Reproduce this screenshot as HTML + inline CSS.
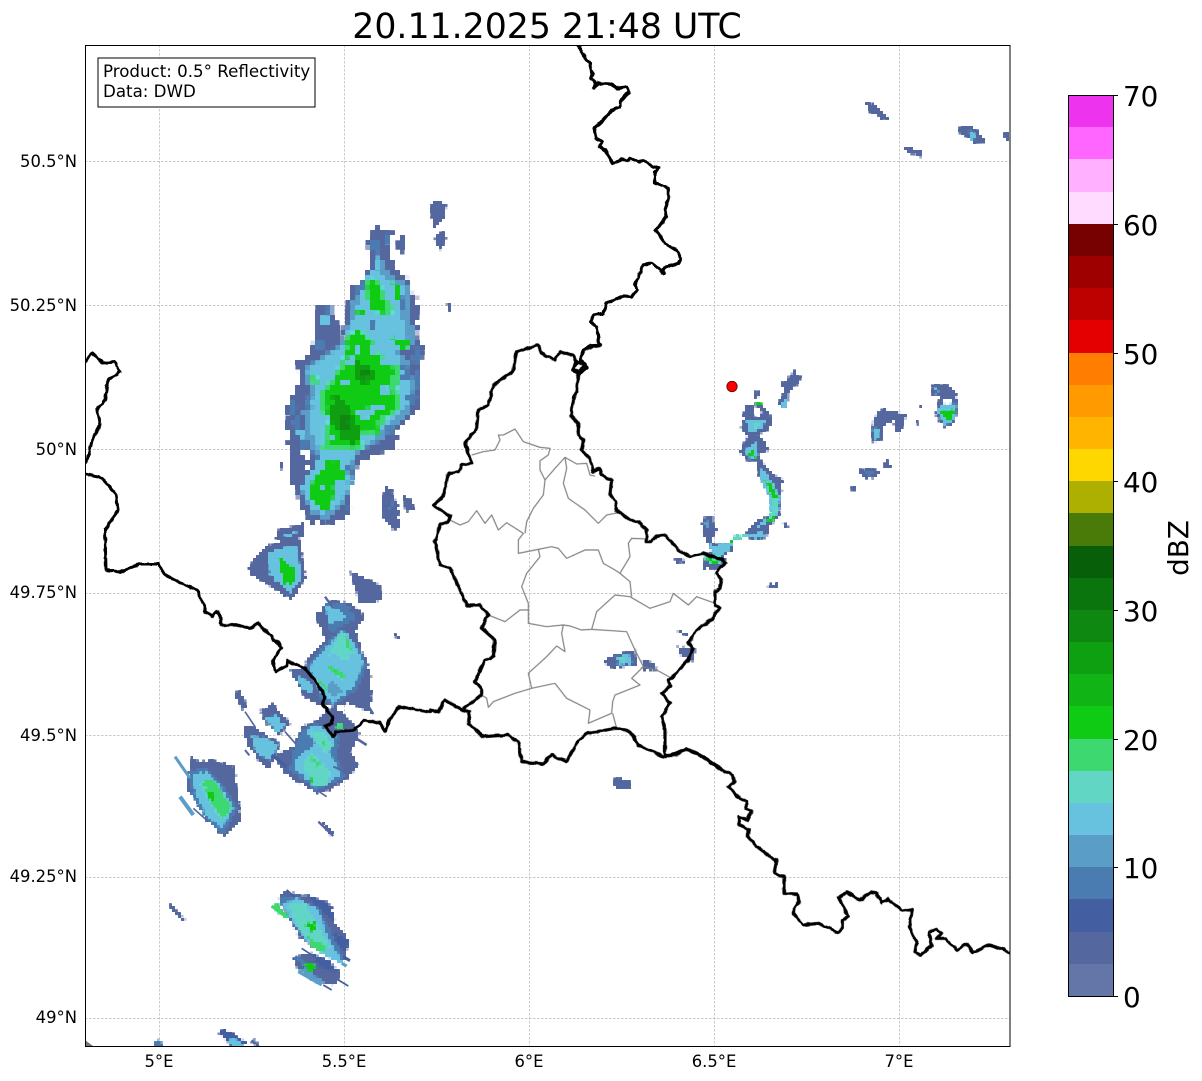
<!DOCTYPE html>
<html><head><meta charset="utf-8"><style>
html,body{margin:0;padding:0;background:#fff;width:1202px;height:1081px;overflow:hidden}
svg{display:block;font-family:"DejaVu Sans",sans-serif}
.g line{stroke:#b6b6b6;stroke-width:.7;stroke-dasharray:2.5 1.5}
.b{fill:none;stroke:#000;stroke-width:3;stroke-linejoin:round;stroke-linecap:round}
.c{fill:none;stroke:#808080;stroke-width:1.2;stroke-linejoin:round}
.t{font-size:16.4px;fill:#000}
.u{font-size:16.67px;fill:#000}
.l{font-size:27.8px;fill:#000}
.a{fill:#54689f}.m{fill:#4a7bb1}.n{fill:#5a9ec7}.y{fill:#66c2de}.q{fill:#62d6c4}.e{fill:#3dd870}.h{fill:#10cb14}.d{fill:#0fa012}.k{fill:#0e8810}.w{fill:#fff}.o{fill:#435ea1}
</style></head><body>
<svg width="1202" height="1081" viewBox="0 0 1202 1081">
<defs>
<clipPath id="ax"><rect x="85" y="45" width="925" height="1001"/></clipPath>
<filter id="j5" filterUnits="userSpaceOnUse" x="85" y="45" width="925" height="1001" color-interpolation-filters="sRGB">
<feTurbulence type="fractalNoise" baseFrequency="0.2" numOctaves="1" seed="4" result="n"/>
<feDisplacementMap in="SourceGraphic" in2="n" scale="6" xChannelSelector="R" yChannelSelector="G" result="s"/>
<feFlood x="87" y="47" width="1" height="1" flood-color="#000"/>
<feComposite x="85" y="45" width="5" height="5"/>
<feTile result="a"/>
<feComposite in="s" in2="a" operator="in"/>
<feMorphology operator="dilate" radius="2"/>
</filter>
<filter id="j3" filterUnits="userSpaceOnUse" x="85" y="45" width="925" height="1001" color-interpolation-filters="sRGB">
<feTurbulence type="fractalNoise" baseFrequency="0.3" numOctaves="1" seed="7" result="n"/>
<feDisplacementMap in="SourceGraphic" in2="n" scale="5" xChannelSelector="R" yChannelSelector="G" result="s"/>
<feFlood x="86" y="46" width="1" height="1" flood-color="#000"/>
<feComposite x="85" y="45" width="3" height="3"/>
<feTile result="a"/>
<feComposite in="s" in2="a" operator="in"/>
<feMorphology operator="dilate" radius="1"/>
</filter>
<filter id="w" filterUnits="userSpaceOnUse" x="60" y="20" width="975" height="1050" color-interpolation-filters="sRGB">
<feTurbulence type="fractalNoise" baseFrequency="0.18" numOctaves="1" seed="11" result="n"/>
<feDisplacementMap in="SourceGraphic" in2="n" scale="3.5" xChannelSelector="R" yChannelSelector="G"/>
</filter>
</defs>
<text x="547" y="38" text-anchor="middle" font-size="34.7" fill="#000">20.11.2025 21:48 UTC</text>
<g class="g">
<line x1="159.5" y1="45" x2="159.5" y2="1046"/><line x1="344.5" y1="45" x2="344.5" y2="1046"/><line x1="529.5" y1="45" x2="529.5" y2="1046"/><line x1="714.5" y1="45" x2="714.5" y2="1046"/><line x1="899.5" y1="45" x2="899.5" y2="1046"/>
<line x1="85" y1="161.5" x2="1010" y2="161.5"/><line x1="85" y1="305.5" x2="1010" y2="305.5"/><line x1="85" y1="449.5" x2="1010" y2="449.5"/><line x1="85" y1="593.5" x2="1010" y2="593.5"/><line x1="85" y1="735.5" x2="1010" y2="735.5"/><line x1="85" y1="877.5" x2="1010" y2="877.5"/><line x1="85" y1="1018.5" x2="1010" y2="1018.5"/>
</g>
<g clip-path="url(#ax)">
<!-- main blob -->
<g filter="url(#j5)">
<g transform="translate(270 200) scale(.3333)">
<polygon class="a" points="330,60 305,95 290,140 300,175 290,225 250,260 225,330 215,420 195,350 165,310 140,315 130,420 120,460 80,485 85,550 55,600 50,670 60,790 70,850 90,900 110,950 125,975 150,960 185,980 250,930 235,880 250,820 270,780 330,760 375,740 385,680 440,630 455,620 445,540 460,450 440,400 445,310 410,235 370,200 350,130 370,100 330,85"/>
<polygon class="a" points="385,105 405,110 400,160 385,140"/>
<polygon class="m" points="315,90 335,170 315,220 270,240 240,320 290,320 330,260"/>
<g class="m"><rect x="60" y="600" width="20" height="40"/><rect x="90" y="720" width="22" height="40"/><rect x="140" y="420" width="30" height="30"/><rect x="430" y="440" width="16" height="50"/><rect x="420" y="520" width="25" height="40"/><rect x="100" y="850" width="15" height="30"/><rect x="300" y="120" width="20" height="30"/><rect x="345" y="100" width="15" height="30"/><rect x="170" y="320" width="20" height="30"/><rect x="230" y="920" width="15" height="15"/></g>
<polygon class="n" points="330,160 300,230 250,310 225,400 200,440 100,510 120,570 100,640 110,720 140,780 115,830 90,870 120,940 175,955 220,910 245,870 245,800 270,755 340,720 390,670 445,600 420,500 395,455 440,430 420,330 420,260 360,225"/>
<polygon class="y" points="325,170 290,240 260,320 240,390 215,440 110,510 130,560 115,620 125,700 150,760 125,810 95,860 125,925 160,945 210,905 235,870 235,800 260,745 330,705 375,655 425,590 405,510 375,450 415,430 395,340 405,265 350,235 325,220"/>
<g class="m"><rect x="150" y="340" width="25" height="40"/><rect x="110" y="590" width="18" height="35"/><rect x="70" y="640" width="18" height="50"/><rect x="395" y="500" width="25" height="40"/><rect x="410" y="580" width="30" height="30"/><rect x="340" y="680" width="30" height="20"/><rect x="390" y="290" width="20" height="40"/><rect x="300" y="355" width="20" height="30"/><rect x="130" y="760" width="20" height="20"/><rect x="230" y="800" width="25" height="20"/></g>
<g class="y"><rect x="150" y="355" width="30" height="20"/><rect x="85" y="690" width="15" height="30"/></g>
<polygon class="e" points="285,240 330,235 345,300 370,320 365,350 300,330 290,290"/>
<polygon class="h" points="295,245 320,240 335,300 355,325 350,345 300,320"/>
<polygon class="h" points="360,240 400,265 380,295"/>
<polygon class="h" points="255,330 285,335 275,355"/>
<polygon class="h" points="360,405 420,430 410,447 375,435"/>
<polygon class="e" points="225,410 270,385 320,430 340,480 390,500 380,560 395,625 340,660 330,710 275,705 280,750 160,750 160,670 145,580 180,545 215,490"/>
<polygon class="h" points="235,410 270,395 310,430 330,480 375,500 365,560 380,625 330,650 320,700 265,695 270,740 170,740 175,670 160,580 190,550 225,490"/>
<polygon class="h" points="170,790 205,780 235,840 190,840 190,910 165,935 125,905 118,860 145,820"/>
<polygon class="d" points="255,480 300,500 320,530 280,560 250,530"/>
<polygon class="d" points="190,580 225,600 250,640 275,700 250,735 210,710 180,650"/>
<rect class="k" x="205" y="640" width="30" height="50"/>
<rect class="k" x="270" y="505" width="30" height="25"/>
<g class="y"><rect x="230" y="470" width="25" height="20"/><rect x="300" y="440" width="25" height="30"/><rect x="330" y="475" width="35" height="20"/><rect x="310" y="610" width="40" height="18"/><rect x="265" y="625" width="40" height="30"/><rect x="150" y="640" width="22" height="40"/><rect x="170" y="705" width="22" height="18"/><rect x="215" y="540" width="25" height="18"/><rect x="330" y="560" width="25" height="20"/><rect x="255" y="440" width="18" height="18"/><rect x="150" y="850" width="22" height="20"/><rect x="350" y="290" width="20" height="15"/></g>
<g class="e"><rect x="365" y="530" width="25" height="30"/><rect x="120" y="525" width="22" height="22"/><rect x="155" y="735" width="30" height="20"/></g>
<g class="w"><rect x="100" y="750" width="18" height="30"/><rect x="105" y="798" width="18" height="18"/><rect x="78" y="520" width="14" height="28"/></g>
</g>
</g>
<!-- other cells -->
<g filter="url(#j3)">
<g transform="translate(270 200) scale(.3333)">
<polygon class="a" points="30,790 38,790 38,808 30,808"/>
<polygon class="a" points="345,860 365,870 385,925 390,985 370,990 340,950 335,910"/>
<polygon class="m" points="360,890 375,915 360,925"/>
<polygon class="a" points="400,890 425,900 435,930 410,935"/>
<polygon class="a" points="530,308 547,308 540,338"/>
<polygon class="a" points="480,10 500,0 530,15 520,60 490,85"/>
<polygon class="a" points="520,90 530,115 510,150 490,120"/>
<polygon class="a" points="18,990 45,985 100,970 100,1010 20,1020"/>
<polygon class="y" points="45,1005 85,995 85,1020 45,1020"/>
</g>
<polygon class="a" points="264,548 298,532 306,578 292,600 250,574 248,566"/>
<polygon class="y" points="268,552 296,545 302,578 290,592 270,575"/>
<polygon class="h" points="278,558 295,568 296,582 284,585"/>
<polygon class="a" points="350,572 380,585 382,600 360,605"/>
<polygon class="a" points="394,633 400,637 398,641"/>
<g transform="translate(170 590) scale(.3333)">
<polygon class="a" points="440,70 480,30 545,40 585,80 555,120 575,180 600,240 605,340 605,370 540,340 495,350 440,340 385,280 410,210 470,150 445,100"/>
<polygon class="m" points="465,40 530,45 560,85 480,130"/>
<polygon class="y" points="465,50 510,55 525,85 480,100"/>
<polygon class="m" points="515,115 565,170 590,225 560,300 490,345 430,310 410,230 465,165"/>
<polygon class="y" points="520,120 555,165 580,220 550,290 490,340 440,300 420,230 470,170"/>
<polygon class="q" points="515,125 545,165 530,215 490,185 475,200"/>
<polygon class="e" points="520,130 550,180 555,200 530,170"/>
<polygon class="n" points="480,270 520,300 495,325 465,300"/>
<polygon class="e" points="475,220 525,255 520,275 480,240"/>
<polygon class="h" points="480,225 505,245 498,250"/>
<polygon class="e" points="440,270 470,290 480,310"/>
<polygon class="a" points="360,240 395,230 450,300 445,345 400,315"/>
<polygon class="y" points="380,255 425,280 425,310 395,295"/>
<polygon class="a" points="190,305 208,302 232,350 215,360"/>
<polygon class="a" points="272,362 305,340 362,400 325,435 285,395"/>
<polygon class="y" points="285,385 320,375 345,410 320,430"/>
<polygon class="a" points="225,400 250,410 330,460 320,490 300,535 280,525 240,480 225,440"/>
<polygon class="y" points="245,440 280,440 325,465 300,510 260,490"/>
<polygon class="a" points="395,410 435,395 490,350 520,370 570,430 540,490 570,525 520,575 480,600 440,610 390,580 345,550 310,500 370,470"/>
<polygon class="m" points="392,425 435,400 510,440 500,500 525,560 440,605 360,540 365,500"/>
<polygon class="y" points="405,425 440,405 495,440 480,490 510,555 440,595 375,535 375,510 440,460"/>
<polygon class="q" points="420,420 460,430 490,465 470,490 440,460"/>
<polygon class="q" points="400,510 430,490 480,545 470,580 440,595 405,545"/>
<polygon class="e" points="420,500 450,520 440,535"/>
<polygon class="h" points="410,555 435,570 430,580"/>
<polygon class="e" points="445,445 470,460 465,470"/>
<polygon class="e" points="495,400 525,405 525,420 505,420"/>
<polygon class="a" points="65,500 85,515 125,510 195,530 200,590 215,690 160,740 105,680 50,590"/>
<polygon class="m" points="60,540 110,535 150,575 200,650 160,735 105,685 65,615"/>
<polygon class="y" points="70,555 110,545 150,590 190,650 155,715 110,675 75,610"/>
<polygon class="q" points="90,580 120,565 170,640 155,690 120,640"/>
<polygon class="e" points="95,570 130,570 185,650 160,690 130,650"/>
<polygon class="h" points="105,600 135,610 135,630 115,630"/>
</g>
<g transform="translate(85 860) scale(.3333)">
<polygon class="a" points="580,115 600,95 680,110 735,130 750,190 795,240 780,300 740,290 685,265 640,225"/>
<polygon class="o" points="670,105 735,130 750,185 700,150"/>
<polygon class="o" points="750,220 795,240 780,270 745,255"/>
<polygon class="m" points="580,115 620,110 700,140 745,230 780,300 740,290 660,240"/>
<polygon class="y" points="590,130 640,115 700,150 730,235 775,310 720,290 660,240"/>
<polygon class="q" points="610,135 660,130 695,190 735,260 700,270 640,205"/>
<polygon class="e" points="560,140 575,130 620,175 600,175"/>
<polygon class="e" points="665,225 725,260 720,280 680,260"/>
<polygon class="h" points="660,195 690,180 695,205 680,215"/>
<polygon class="a" points="625,295 640,285 680,280 730,300 770,340 750,375 700,365 640,330"/>
<polygon class="o" points="680,280 730,300 760,340 700,320"/>
<polygon class="n" points="640,330 660,325 715,365 700,375"/>
<polygon class="h" points="655,315 685,305 695,325 675,335"/>
<polygon class="a" points="255,130 280,155 305,185 298,188 270,160 252,138"/>
<polygon class="m" points="202,552 220,540 240,560 208,560"/>
<polygon class="o" points="400,520 415,505 490,550 440,560"/>
<polygon class="y" points="430,540 450,535 480,560 440,560"/>
<polygon class="a" points="495,540 505,540 525,560 515,560"/>
</g>
<polygon class="a" points="320,820 323,820 334,834 331,837"/>
<polygon class="a" points="612,778 630,780 631,788 615,790"/>
<!-- east chain (zoom origin 690,400) -->
<g transform="translate(690 400) scale(.3333)">
<polygon class="a" points="165,15 215,10 250,60 230,95 205,105 240,145 205,165 240,215 278,240 270,300 270,345 235,385 230,415 185,422 168,398 195,370 240,340 245,300 205,225 200,180 175,185 145,155 160,130 175,115 155,85"/>
<polygon class="w" points="190,20 215,30 210,55 195,45"/>
<polygon class="y" points="170,60 225,60 215,90 175,95"/>
<polygon class="q" points="185,65 210,70 195,85"/>
<polygon class="y" points="165,150 200,125 205,165 180,180"/>
<polygon class="h" points="172,170 188,145 195,175"/>
<polygon class="y" points="210,205 235,225 270,290 265,340 235,370 195,385 240,340 240,290 210,235"/>
<polygon class="q" points="220,235 250,255 265,300 260,340 235,365 245,330 245,290"/>
<polygon class="h" points="222,240 250,258 265,295 250,295"/>
<polygon class="h" points="228,362 265,340 255,355 235,372"/>
<polygon class="y" points="175,405 220,395 225,410 190,415"/>
<polygon class="h" points="195,6 212,6 212,18 198,18"/>
<polygon class="a" points="40,350 70,350 70,375 85,390 60,420 75,430 125,430 130,445 105,470 105,490 80,505 40,505 40,475 65,450 35,395"/>
<polygon class="y" points="60,435 125,430 120,450 95,465 70,460"/>
<polygon class="n" points="45,365 60,365 60,380 45,380"/>
<polygon class="q" points="40,470 90,465 95,490 60,495"/>
<polygon class="h" points="45,475 85,480 80,495"/>
<polygon class="q" points="130,408 175,402 175,414 130,420"/>
<polygon class="h" points="115,432 130,420 133,424 120,434"/>
<polygon class="a" points="278,370 292,368 294,382 282,382"/>
</g>
<g transform="translate(670 360) scale(.3333)">
<polygon class="a" points="370,30 395,55 355,100 355,145 335,145 325,125 345,90 325,70 350,65"/>
<polygon class="y" points="332,125 350,118 352,140 338,142"/>
<polygon class="a" points="10,592 35,595 42,608 20,612"/>
<polygon class="a" points="255,88 272,100 258,115 248,100"/>
<polygon class="a" points="295,675 325,670 320,685 295,685"/>
<polygon class="a" points="640,145 710,165 695,215 680,220 670,180 640,195 635,240 610,250 600,210 615,170"/>
<polygon class="y" points="608,205 630,205 625,235 612,238"/>
<polygon class="a" points="565,330 605,325 630,335 610,358 585,355"/>
<polygon class="m" points="585,335 610,335 600,350"/>
<polygon class="a" points="640,310 655,300 662,320 645,325"/>
<polygon class="a" points="540,385 550,375 560,388 550,395"/>
<polygon class="a" points="750,135 758,133 755,150"/>
<polygon class="a" points="740,185 746,183 742,200"/>
<polygon class="a" points="785,75 830,72 860,100 865,150 850,190 825,205 795,165 810,110 785,105"/>
<polygon class="w" points="820,115 845,115 845,135 820,135"/>
<polygon class="y" points="790,85 806,85 800,105"/>
<polygon class="y" points="800,150 820,130 860,130 855,180 825,195"/>
<polygon class="h" points="808,150 828,152 860,145 835,188"/>
</g>
<!-- lux cell -->
<g transform="translate(430 340) scale(.3333)">
<polygon class="a" points="520,965 565,940 615,930 620,975 540,985"/>
<polygon class="y" points="555,950 595,940 610,970 570,975"/>
<polygon class="q" points="565,955 585,950 590,970 570,970"/>
<polygon class="a" points="640,960 670,965 680,990 635,990"/>
<polygon class="a" points="740,870 775,880 775,890 745,880"/>
<polygon class="a" points="740,920 795,925 790,965 750,945"/>
</g>
<polygon class="a" points="865,102 875,105 890,118 885,120 870,112"/>
<polygon class="a" points="903,146 920,150 922,157 908,153"/>
<polygon class="a" points="956,130 970,124 988,142 975,143"/>
<polygon class="y" points="968,130 976,135 972,142"/>
<polygon class="a" points="1003,135 1010,130 1010,143"/>
</g>
<!-- thin radial streaks, unfiltered -->
<g transform="translate(170 590) scale(.3333)" fill="none">
<line x1="15" y1="500" x2="60" y2="565" stroke="#5a9ec7" stroke-width="9"/>
<line x1="30" y1="620" x2="70" y2="675" stroke="#5a9ec7" stroke-width="12"/>
<line x1="70" y1="655" x2="115" y2="695" stroke="#54689f" stroke-width="5"/>
<line x1="225" y1="480" x2="238" y2="496" stroke="#54689f" stroke-width="6"/>
<line x1="225" y1="365" x2="255" y2="410" stroke="#54689f" stroke-width="5"/>
<line x1="445" y1="695" x2="490" y2="738" stroke="#54689f" stroke-width="7"/>
<line x1="505" y1="480" x2="565" y2="525" stroke="#54689f" stroke-width="6"/>
<line x1="490" y1="530" x2="540" y2="550" stroke="#54689f" stroke-width="6"/>
<line x1="345" y1="425" x2="380" y2="465" stroke="#54689f" stroke-width="5"/>
<line x1="305" y1="495" x2="350" y2="530" stroke="#435ea1" stroke-width="9"/>
<line x1="550" y1="440" x2="590" y2="465" stroke="#54689f" stroke-width="8"/>
<line x1="590" y1="340" x2="610" y2="372" stroke="#54689f" stroke-width="7"/>
<line x1="465" y1="20" x2="490" y2="55" stroke="#54689f" stroke-width="7"/>
<line x1="440" y1="600" x2="470" y2="620" stroke="#54689f" stroke-width="5"/>
</g>
<g transform="translate(85 860) scale(.3333)" fill="none">
<line x1="605" y1="90" x2="630" y2="112" stroke="#435ea1" stroke-width="6"/>
<line x1="650" y1="265" x2="680" y2="285" stroke="#435ea1" stroke-width="5"/>
<line x1="760" y1="360" x2="790" y2="378" stroke="#435ea1" stroke-width="5"/>
<line x1="715" y1="375" x2="740" y2="390" stroke="#435ea1" stroke-width="5"/>
<line x1="775" y1="290" x2="795" y2="302" stroke="#435ea1" stroke-width="9"/>
<line x1="770" y1="310" x2="785" y2="318" stroke="#5a9ec7" stroke-width="9"/>
<line x1="640" y1="335" x2="710" y2="375" stroke="#5a9ec7" stroke-width="9"/>
<line x1="630" y1="290" x2="660" y2="310" stroke="#4a7bb1" stroke-width="11"/>
<line x1="560" y1="138" x2="595" y2="165" stroke="#3dd870" stroke-width="9"/>
<line x1="500" y1="540" x2="522" y2="558" stroke="#54689f" stroke-width="5"/>
</g>
<polygon points="85,1040 93,1046 85,1046" fill="#777"/>
</g>
<!-- canton lines -->
<g transform="translate(430 340) scale(.3333)">
<g style="stroke-width:3.6" class="c">
<polyline fill="none" points="125,345 160,335 195,330 210,300 205,285 220,285 255,267 280,305 330,322 360,325 355,345 330,362 330,390 345,420 375,385 405,352 410,385 400,430 415,475 465,510 505,550 530,525 565,518"/>
<polyline fill="none" points="405,352 440,372 470,370 480,405 495,408"/>
<polyline fill="none" points="345,420 340,465 310,505 290,545 285,580"/>
<polyline fill="none" points="60,540 90,555 115,545 140,512 165,550 185,525 205,570 230,548 280,580 265,600 265,640 325,628 365,620 385,625 410,655 465,630 505,630 520,670 555,690 570,700 600,650 595,610 605,595 650,597"/>
<polyline fill="none" points="570,700 600,725 605,770"/>
<polyline fill="none" points="325,628 330,650 290,700 275,740 295,790 295,850 350,860 400,855 420,858 455,870 485,868 500,815 555,765 600,770 660,805 720,785 730,760 775,795 800,770 850,788"/>
<polyline fill="none" points="295,810 270,810 225,845 175,825"/>
<polyline fill="none" points="400,855 395,880 405,935 380,918 350,950 295,1000 305,1045 375,1030 410,1075 480,1110 475,1150 545,1120 548,1085 555,1065 630,1035 605,1015 640,980 680,990 720,1012"/>
<polyline fill="none" points="485,868 590,875 615,930 640,980"/>
<polyline fill="none" points="305,1045 255,1060 190,1085 175,1102 170,1075 155,1065"/>
<polyline fill="none" points="548,1120 560,1165"/>
</g></g>
<!-- borders -->
<g clip-path="url(#ax)">
<g filter="url(#w)">
<g transform="translate(570 40) scale(.3333)"><polyline style="stroke-width:9.5" class="b" points="25,18 40,45 58,70 68,100 62,115 78,130 72,145 85,130 120,132 140,145 172,140 177,155 150,185 150,200 125,210 100,240 72,265 78,295 98,305 88,320 105,330 128,372 155,358 175,362 182,355 205,365 220,362 250,380 268,385 255,395 255,430 295,445 295,480 285,510 288,530 258,572 285,610 325,635 332,655 325,670 290,680 280,690 283,700 245,670 218,675 205,715 195,730 200,750 185,770 160,768 110,790 100,820 70,825 62,845 80,860 88,915 60,918 40,930 30,960 45,970 50,985 30,1000 10,990 20,965"/></g>
<g transform="translate(430 340) scale(.3333)"><g style="stroke-width:9.5" class="b">
<polyline points="510,15 490,18 460,30 450,65 470,80 450,95 428,90 440,68 465,70 445,100 440,150 428,190 422,225 445,250 445,285 460,300 455,330 480,355 490,395 510,385 515,405 545,420 540,460 555,485 560,510 600,540 625,545 650,570 650,605 665,605 680,588 705,585 745,630 780,650 820,640 860,655 880,660 885,670 865,690 860,700 875,720 870,745 855,755 855,795 870,805 855,820 850,835 800,870 775,910 790,925 775,960 725,1015 715,1020 720,1040 695,1060 720,1090 695,1130 705,1170 705,1250"/>
<polyline points="440,68 430,45 390,35 375,60 335,40 325,15 260,35 248,95 190,135 175,195 145,210 140,265 105,310 125,370 95,375 85,395 55,400 40,470 10,495 60,530 55,545 30,555 15,605 30,675 60,685 110,795 150,795 175,825 155,865 195,900 190,950 165,960 135,1025 155,1050 155,1065 95,1110 45,1080 25,1115 0,1110"/>
<polyline points="95,1110 120,1115 115,1150 160,1190 235,1185 265,1205 275,1265 340,1272 365,1245 410,1265 440,1210 470,1180 560,1165 600,1175 625,1215 700,1250 770,1230 810,1245 875,1290"/>
</g></g>
<g transform="translate(660 740) scale(.3333)"><polyline style="stroke-width:9.5" class="b" points="15,45 45,45 80,25 120,45 165,75 215,105 225,125 205,140 240,175 260,185 258,205 275,212 262,240 235,230 240,255 268,270 262,290 290,320 335,355 350,360 342,400 372,410 372,460 410,462 418,485 398,518 430,555 475,550 535,578 547,565 547,540 565,530 550,500 535,472 560,457 600,480 630,457 650,460 665,488 685,478 725,510 757,510 748,560 770,610 765,635 782,645 815,615 808,575 830,568 845,580 830,595 855,595 890,630 920,612 940,638 985,615 1030,628 1050,638"/></g>
<g transform="translate(170 590) scale(.3333)"><polyline style="stroke-width:9.5" class="b" points="80,0 105,50 105,65 128,78 138,65 150,72 153,105 200,105 240,115 265,100 335,172 308,213 316,245 350,228 352,212 405,235 445,285 465,320 458,345 487,380 485,400 465,408 490,440 500,425 550,420 585,390 630,400 645,425 660,385 690,350 780,366"/></g>
<polyline class="b" points="85,474 102,478 116,495 118,510 105,530 106,570 120,572 140,564 158,564 165,575 185,585 197,590"/>
<polyline class="b" points="85,362 92,353 103,363 115,362 120,372 108,380 105,400 97,410 100,425 92,440 88,458 85,462"/>
</g>
</g>
<circle cx="732" cy="386.500" r="5.200" fill="#f00" stroke="#600" stroke-width=".8"/>
<rect x="85.500" y="45.500" width="924.500" height="1001" fill="none" stroke="#000" stroke-width="1"/>
<rect x="98" y="58" width="217" height="49" fill="#fff" stroke="#000" stroke-width="1"/>
<text class="u" x="103" y="77">Product: 0.5° Reflectivity</text>
<text class="u" x="103" y="97">Data: DWD</text>
<g class="t" text-anchor="end">
<text x="77" y="167">50.5°N</text><text x="77" y="311">50.25°N</text><text x="77" y="455">50°N</text><text x="77" y="598">49.75°N</text><text x="77" y="741">49.5°N</text><text x="77" y="882">49.25°N</text><text x="77" y="1023">49°N</text>
</g>
<g class="t" text-anchor="middle">
<text x="159" y="1067">5°E</text><text x="344" y="1067">5.5°E</text><text x="529" y="1067">6°E</text><text x="714" y="1067">6.5°E</text><text x="899" y="1067">7°E</text>
</g>
<!-- colorbar -->
<g shape-rendering="crispEdges">
<rect x="1068" y="95" width="45" height="33" fill="#ed33ed"/>
<rect x="1068" y="127" width="45" height="33" fill="#ff66ff"/>
<rect x="1068" y="159" width="45" height="33" fill="#ffb0ff"/>
<rect x="1068" y="192" width="45" height="32" fill="#ffdcff"/>
<rect x="1068" y="224" width="45" height="32" fill="#770000"/>
<rect x="1068" y="256" width="45" height="32" fill="#9e0000"/>
<rect x="1068" y="288" width="45" height="32" fill="#bd0000"/>
<rect x="1068" y="320" width="45" height="33" fill="#e40000"/>
<rect x="1068" y="353" width="45" height="32" fill="#ff7d00"/>
<rect x="1068" y="385" width="45" height="32" fill="#ff9a00"/>
<rect x="1068" y="417" width="45" height="32" fill="#ffb400"/>
<rect x="1068" y="449" width="45" height="32" fill="#ffd700"/>
<rect x="1068" y="481" width="45" height="32" fill="#adb000"/>
<rect x="1068" y="513" width="45" height="33" fill="#4a7a08"/>
<rect x="1068" y="546" width="45" height="32" fill="#085f0a"/>
<rect x="1068" y="578" width="45" height="32" fill="#0a750c"/>
<rect x="1068" y="610" width="45" height="32" fill="#0e8810"/>
<rect x="1068" y="642" width="45" height="32" fill="#0fa012"/>
<rect x="1068" y="674" width="45" height="32" fill="#10b414"/>
<rect x="1068" y="706" width="45" height="33" fill="#10cb14"/>
<rect x="1068" y="739" width="45" height="32" fill="#3dd870"/>
<rect x="1068" y="771" width="45" height="32" fill="#62d6c4"/>
<rect x="1068" y="803" width="45" height="32" fill="#66c2de"/>
<rect x="1068" y="835" width="45" height="32" fill="#5a9ec7"/>
<rect x="1068" y="867" width="45" height="32" fill="#4a7bb1"/>
<rect x="1068" y="899" width="45" height="33" fill="#435ea1"/>
<rect x="1068" y="932" width="45" height="32" fill="#54689f"/>
<rect x="1068" y="964" width="45" height="32" fill="#6476a8"/>
</g>
<rect x="1068.500" y="95.500" width="45" height="901" fill="none" stroke="#000" stroke-width="1"/>
<g stroke="#000" stroke-width="1">
<line x1="1113" y1="95.500" x2="1118" y2="95.500"/><line x1="1113" y1="224.500" x2="1118" y2="224.500"/><line x1="1113" y1="353.500" x2="1118" y2="353.500"/><line x1="1113" y1="481.500" x2="1118" y2="481.500"/><line x1="1113" y1="610.500" x2="1118" y2="610.500"/><line x1="1113" y1="739.500" x2="1118" y2="739.500"/><line x1="1113" y1="867.500" x2="1118" y2="867.500"/><line x1="1113" y1="996.500" x2="1118" y2="996.500"/>
</g>
<g class="l">
<text x="1123" y="106">70</text><text x="1123" y="235">60</text><text x="1123" y="364">50</text><text x="1123" y="492">40</text><text x="1123" y="621">30</text><text x="1123" y="750">20</text><text x="1123" y="878">10</text><text x="1123" y="1007">0</text>
</g>
<text class="l" transform="translate(1188 548) rotate(-90)" text-anchor="middle">dBZ</text>
</svg>
</body></html>
